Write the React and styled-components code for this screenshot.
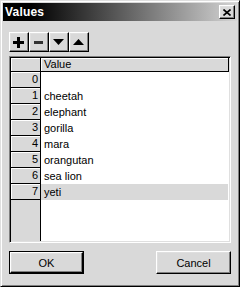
import React from "react";
import styled, { createGlobalStyle, css } from "styled-components";

const GlobalStyle = createGlobalStyle`
  html, body {
    margin: 0;
    padding: 0;
    background: #d9d9d9;
  }
  body {
    font-family: "Liberation Sans", Arial, sans-serif;
    font-size: 11px;
    color: #000;
  }
`;

const raised = css`
  box-sizing: border-box;
  background: #d9d9d9;
  border-top: 1px solid #fff;
  border-left: 1px solid #fff;
  border-right: 1px solid #000;
  border-bottom: 1px solid #000;
  box-shadow: inset -1px -1px #808080, inset 1px 1px #dfdfdf;
`;

const animals = ["", "cheetah", "elephant", "gorilla", "mara", "orangutan", "sea lion", "yeti"];

const App = () => {
  return (
    <>
      <GlobalStyle />
      <Window>
        <TitleBar>
          <Title>Values</Title>
          <CloseButton>
            <svg width="8" height="7" viewBox="0 0 8 7">
              <path d="M0.5 0.5 L7.5 6.5 M7.5 0.5 L0.5 6.5" stroke="#000" strokeWidth="1.6" fill="none" />
            </svg>
          </CloseButton>
        </TitleBar>
        <Body>
          <Toolbar>
            <ToolButton>
              <svg width="11" height="11" viewBox="0 0 11 11">
                <rect x="4" y="0" width="3" height="11" fill="#000" />
                <rect x="0" y="4" width="11" height="3" fill="#000" />
              </svg>
            </ToolButton>
            <ToolButton>
              <svg width="9" height="3" viewBox="0 0 9 3">
                <rect x="0" y="0" width="9" height="3" fill="#333" />
              </svg>
            </ToolButton>
            <ToolButton>
              <svg width="11" height="6" viewBox="0 0 11 6">
                <polygon points="0,0 11,0 5.5,6" fill="#000" />
              </svg>
            </ToolButton>
            <ToolButton>
              <svg width="11" height="6" viewBox="0 0 11 6">
                <polygon points="0,6 11,6 5.5,0" fill="#000" />
              </svg>
            </ToolButton>
          </Toolbar>
          <GridFrame>
            <HeaderRow>
              <CornerCell />
              <HeaderCell>Value</HeaderCell>
            </HeaderRow>
            {animals.map((name, i) => (
              <Row key={i}>
                <RowHead>{i}</RowHead>
                <Cell $selected={i === animals.length - 1}>{name}</Cell>
              </Row>
            ))}
            <Filler>
              <FillerHead />
              <FillerCell />
            </Filler>
          </GridFrame>
          <ButtonBar>
            <DefaultButton>
              <Button>OK</Button>
            </DefaultButton>
            <Button>Cancel</Button>
          </ButtonBar>
        </Body>
      </Window>
    </>
  );
};

export default App;

const Window = styled.div`
  box-sizing: border-box;
  width: 240px;
  height: 287px;
  padding: 2px;
  background: #d9d9d9;
  border-top: 1px solid #dfdfdf;
  border-left: 1px solid #dfdfdf;
  border-right: 1px solid #000;
  border-bottom: 1px solid #000;
  box-shadow: inset 1px 1px #fff, inset -1px -1px #808080;
  display: flex;
  flex-direction: column;
`;

const TitleBar = styled.div`
  height: 18px;
  display: flex;
  align-items: center;
  justify-content: space-between;
  padding: 0 2px 0 2px;
  background: linear-gradient(to right, #000 12%, #d4d4d4 100%);
`;

const Title = styled.div`
  color: #fff;
  font-weight: bold;
  font-size: 12px;
  letter-spacing: 0.2px;
`;

const CloseButton = styled.div`
  ${raised};
  width: 16px;
  height: 14px;
  display: flex;
  align-items: center;
  justify-content: center;
`;

const Body = styled.div`
  flex: 1;
  display: flex;
  flex-direction: column;
  padding: 11px 6px 10px 6px;
`;

const Toolbar = styled.div`
  display: flex;
  gap: 0.5px;
  height: 20px;
`;

const ToolButton = styled.div`
  ${raised};
  width: 19.5px;
  height: 20px;
  display: flex;
  align-items: center;
  justify-content: center;
`;

const GridFrame = styled.div`
  box-sizing: border-box;
  margin-top: 4px;
  width: 222px;
  height: 187px;
  padding: 1px;
  border-top: 1px solid #808080;
  border-left: 1px solid #808080;
  border-right: 1px solid #fff;
  border-bottom: 1px solid #fff;
  box-shadow: inset 1px 1px #000, inset -1px -1px #dfdfdf;
  background: #fff;
  display: flex;
  flex-direction: column;
`;

const HeaderRow = styled.div`
  display: flex;
  height: 14px;
`;

const headCell = css`
  box-sizing: border-box;
  background: #d9d9d9;
  border-right: 1px solid #000;
  border-bottom: 1px solid #000;
  box-shadow: inset 1px 1px #fff;
`;

const CornerCell = styled.div`
  ${headCell};
  width: 30px;
`;

const HeaderCell = styled.div`
  ${headCell};
  flex: 1;
  padding-left: 3px;
  line-height: 13px;
`;

const Row = styled.div`
  display: flex;
  height: 16px;
`;

const RowHead = styled.div`
  ${headCell};
  width: 30px;
  text-align: right;
  padding-right: 2px;
  line-height: 15px;
`;

const Cell = styled.div`
  flex: 1;
  padding-left: 3px;
  line-height: 16px;
  margin-right: 1px;
  background: ${({ $selected }) => ($selected ? "#d9d9d9" : "#fff")};
`;

const Filler = styled.div`
  flex: 1;
  display: flex;
`;

const FillerHead = styled.div`
  box-sizing: border-box;
  width: 30px;
  background: #d9d9d9;
  border-right: 1px solid #000;
`;

const FillerCell = styled.div`
  flex: 1;
  background: #fff;
`;

const ButtonBar = styled.div`
  margin-top: 8px;
  display: flex;
  justify-content: space-between;
  width: 222px;
`;

const Button = styled.div`
  ${raised};
  width: 75px;
  height: 23px;
  display: flex;
  align-items: center;
  justify-content: center;
  font-size: 11px;
`;

const DefaultButton = styled.div`
  border: 1px solid #000;
  display: flex;
  & > div {
    width: 73px;
    height: 21px;
  }
`;
